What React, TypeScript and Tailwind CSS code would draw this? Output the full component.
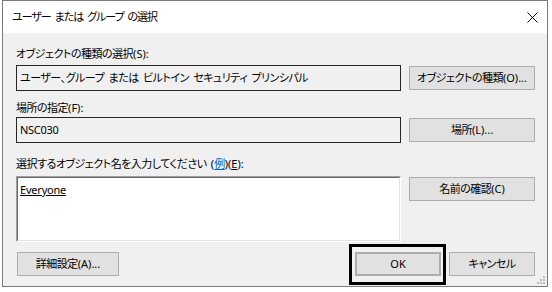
import React from 'react';

const FONT = { fontFamily: '"Noto Sans", "Noto Sans CJK JP", sans-serif' };

// Latin run inside a tightened CJK line
function L({ children, className = '' }: { children: React.ReactNode; className?: string }) {
  return <span className={'tracking-normal ' + className}>{children}</span>;
}

// Plain Win32-style push button
function Btn({ children, className = '' }: { children: React.ReactNode; className?: string }) {
  return (
    <div
      className={
        'h-[24px] flex items-center justify-center whitespace-nowrap bg-[#e1e1e1] border border-[#adadad] leading-[16px] text-black ' +
        className
      }
    >
      {children}
    </div>
  );
}

function ResizeGrip() {
  const dots = [
    [6, 0],
    [3, 3],
    [6, 3],
    [0, 6],
    [3, 6],
    [6, 6],
  ];
  return (
    <svg width="8" height="8" viewBox="0 0 8 8" className="absolute right-[2px] bottom-[2px]">
      {dots.map(([x, y], i) => (
        <rect key={i} x={x} y={y} width="2" height="2" fill="#bdbdbd" />
      ))}
    </svg>
  );
}

export default function App() {
  return (
    <div
      className="w-[552px] h-[292px] bg-white text-[11px] [font-feature-settings:'palt'] [word-spacing:2px]"
      style={FONT}
    >
      <div className="relative ml-[2px] w-[546px] h-[287px] border border-[#7a7a7a] flex flex-col">
        {/* Title bar */}
        <div className="h-[32px] bg-white flex items-center justify-between pl-[9px] pr-[9px]">
          <span className="leading-[16px] text-black tracking-[-1px]">ユーザー または グループ の選択</span>
          <svg width="11" height="11" viewBox="0 0 11 11">
            <path d="M0.5 0.5 L10.5 10.5 M10.5 0.5 L0.5 10.5" stroke="#000" strokeWidth="1" />
          </svg>
        </div>

        {/* Body */}
        <div className="flex-1 bg-[#f0f0f0] pl-[13px] pr-[12px] pt-[13px] leading-[16px] text-black whitespace-nowrap tracking-[-0.5px]">
          {/* Object type */}
          <div className="mb-[3px]">
            オブジェクトの種類の選択<L>(S):</L>
          </div>
          <div className="flex items-center gap-[8px] h-[26px]">
            <div className="w-[385px] h-[26px] border border-[#262626] flex items-center px-[3px]">
              ユーザー、グループ または ビルトイン セキュリティ プリンシパル
            </div>
            <Btn className="w-[126px]">
              オブジェクトの種類<L>(O)...</L>
            </Btn>
          </div>

          {/* Location */}
          <div className="mt-[9px] mb-[1px]">
            場所の指定<L>(F):</L>
          </div>
          <div className="flex items-center gap-[8px] h-[26px]">
            <div className="w-[385px] h-[26px] border border-[#262626] flex items-center px-[3px] tracking-[-0.3px]">
              NSC030
            </div>
            <Btn className="w-[126px]">
              場所<L>(L)...</L>
            </Btn>
          </div>

          {/* Object names */}
          <div className="mt-[13px] mb-[4px]">
            選択するオブジェクト名を入力してください <L>(</L>
            <span className="text-[#0066cc] underline">例</span>
            <L>
              )(<span className="underline">E</span>):
            </L>
          </div>
          <div className="flex items-start gap-[8px]">
            <div className="w-[385px] h-[66px] border-t border-l border-t-[#a0a0a0] border-l-[#a0a0a0] border-b border-r border-b-[#ffffff] border-r-[#ffffff]">
              <div className="h-full bg-white border-t border-l border-t-[#696969] border-l-[#696969] border-b border-r border-b-[#e3e3e3] border-r-[#e3e3e3] px-[2px] pt-[4px] tracking-[-0.2px]">
                <span className="underline">Everyone</span>
              </div>
            </div>
            <Btn className="w-[126px] mt-[1px]">
              名前の確認<L>(C)</L>
            </Btn>
          </div>

          {/* Bottom row */}
          <div className="flex items-center mt-[10px]">
            <Btn className="w-[102px] ml-[1px]">
              詳細設定<L>(A)...</L>
            </Btn>
            <div className="flex-1" />
            <Btn className="w-[86px] border-2 border-[#0078d7] tracking-normal">OK</Btn>
            <Btn className="w-[86px] ml-[8px]">キャンセル</Btn>
          </div>
        </div>

        {/* Highlight frame around OK */}
        <div className="absolute left-[346px] top-[243px] w-[97px] h-[41px] border-[3px] border-black" />
        <ResizeGrip />
      </div>
    </div>
  );
}
